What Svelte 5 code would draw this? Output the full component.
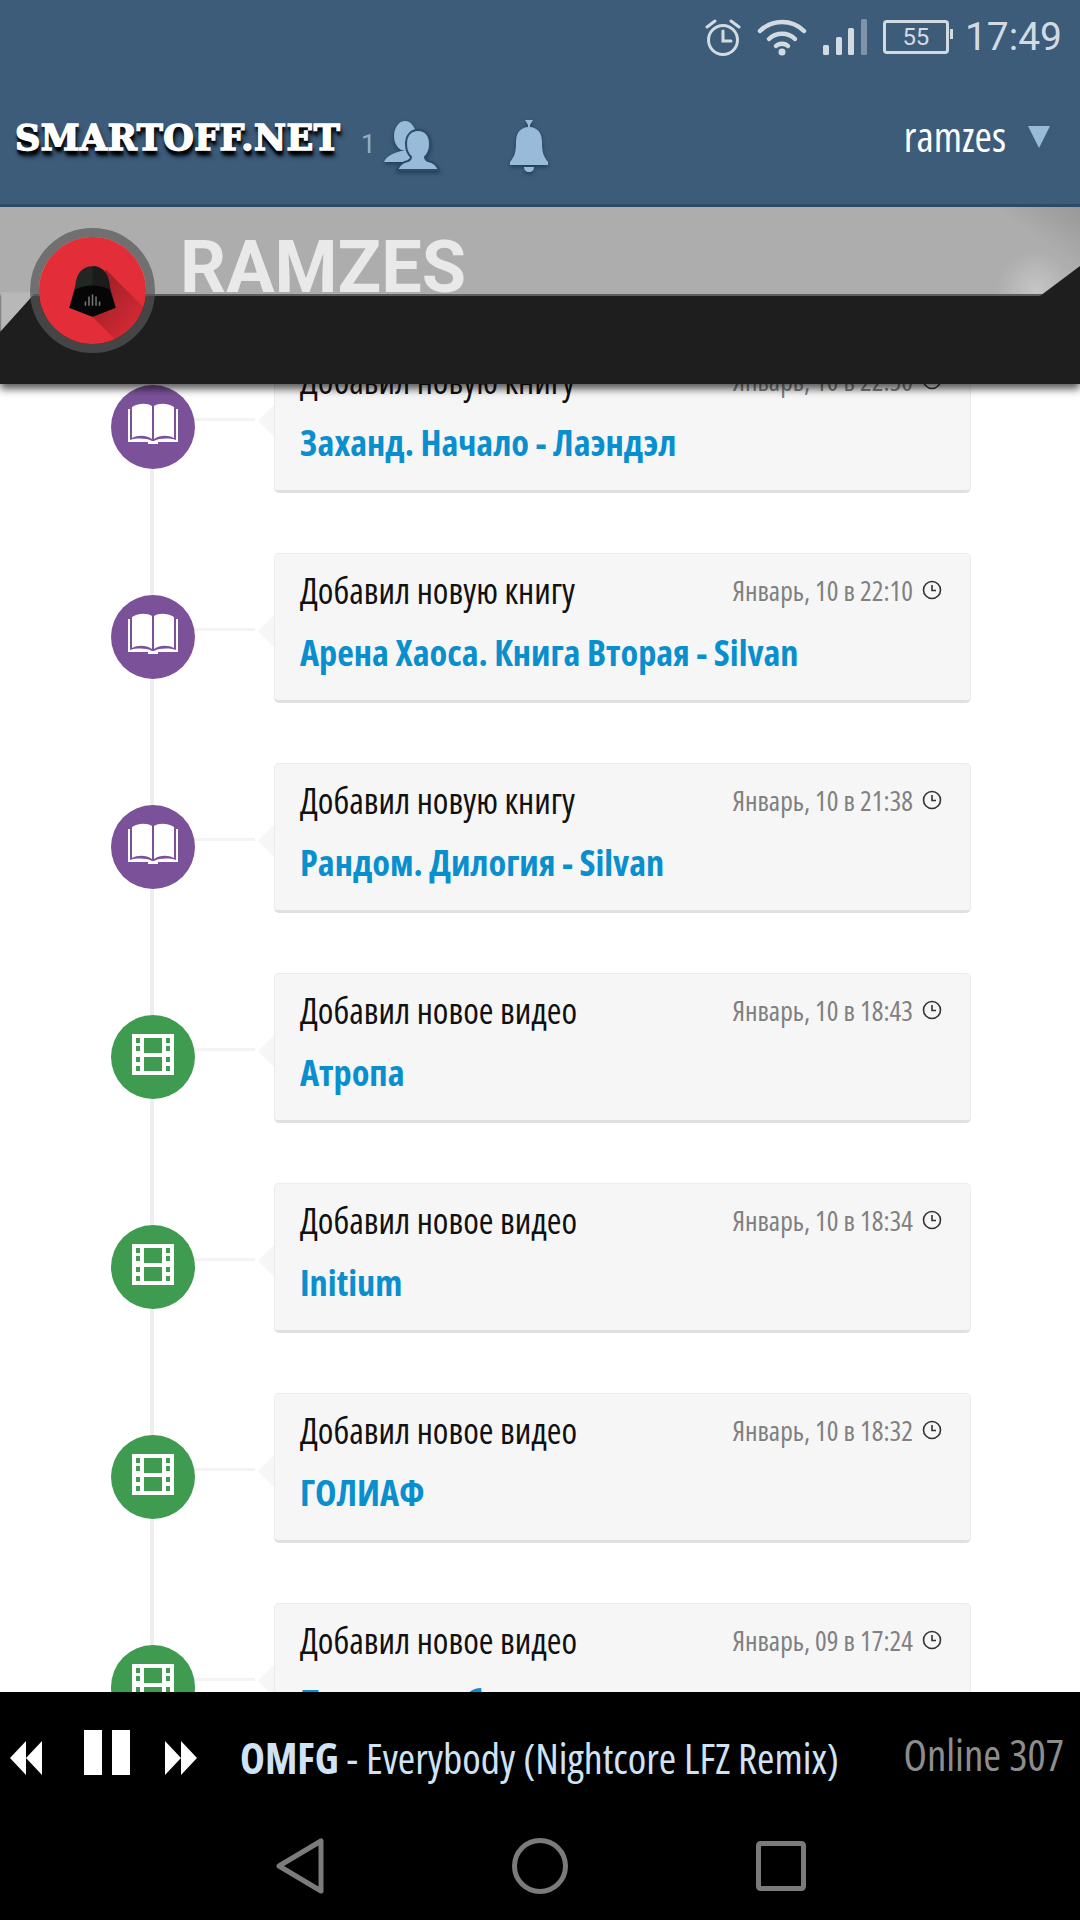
<script>
	const items = [
		{ kind: 'book', action: 'Добавил новую книгу', date: 'Январь, 10 в 22:50', title: 'Заханд. Начало - Лаэндэл' },
		{ kind: 'book', action: 'Добавил новую книгу', date: 'Январь, 10 в 22:10', title: 'Арена Хаоса. Книга Вторая - Silvan' },
		{ kind: 'book', action: 'Добавил новую книгу', date: 'Январь, 10 в 21:38', title: 'Рандом. Дилогия - Silvan' },
		{ kind: 'video', action: 'Добавил новое видео', date: 'Январь, 10 в 18:43', title: 'Атропа' },
		{ kind: 'video', action: 'Добавил новое видео', date: 'Январь, 10 в 18:34', title: 'Initium' },
		{ kind: 'video', action: 'Добавил новое видео', date: 'Январь, 10 в 18:32', title: 'ГОЛИАФ' },
		{ kind: 'video', action: 'Добавил новое видео', date: 'Январь, 09 в 17:24', title: 'Последняя битва' }
	];
</script>

<div class="screen">
	<header class="topbar">
		<div class="status">
			<svg class="ic-alarm" viewBox="0 0 36 38" width="36" height="38" fill="none" stroke="#d3dbe2" stroke-width="3">
				<circle cx="18" cy="22" r="14.5" />
				<path d="M18 13v10h8" stroke-linecap="round" />
				<path d="M2 9 10 3M34 9 26 3" stroke-linecap="round" />
			</svg>
			<svg class="ic-wifi" viewBox="0 0 50 38" width="50" height="38" fill="none" stroke="#d3dbe2" stroke-width="4.5" stroke-linecap="round">
				<path d="M3 13C15 1 35 1 47 13" />
				<path d="M12 21C19 14 31 14 38 21" />
				<path d="M19 28C22 25 28 25 31 28" />
				<circle cx="25" cy="34" r="3.5" fill="#d3dbe2" stroke="none" />
			</svg>
			<svg class="ic-signal" viewBox="0 0 44 36" width="44" height="36" fill="#d3dbe2">
				<rect x="0" y="26" width="6" height="10" rx="1.5" />
				<rect x="13" y="18" width="6" height="18" rx="1.5" />
				<rect x="25" y="9" width="6" height="27" rx="1.5" />
				<rect x="38" y="0" width="6" height="36" rx="1.5" fill="#7f94a8" />
			</svg>
			<div class="battery"><span>55</span></div>
			<span class="clock">17:49</span>
		</div>
		<nav class="mainbar">
			<span class="logo">SMARTOFF.NET</span>
			<span class="count">1</span>
			<svg class="ic-friends" viewBox="0 0 56 50" width="56" height="50" fill="#98bbd9">
				<ellipse cx="21" cy="15" rx="11" ry="15" />
				<path d="M0 41c2-6 10-9 17-11h9v11z" />
				<path d="M34 9c8 0 12 6 12 14 0 6-2 10-5 13 0 2 1 3 3 4 5 1 9 4 11 9H13c2-5 6-8 11-9 2-1 3-2 3-4-3-3-5-7-5-13 0-8 4-14 12-14z" stroke="#2e4b68" stroke-width="2" />
			</svg>
			<svg class="ic-bell" viewBox="0 0 38 52" width="38" height="52" fill="#98bbd9">
				<path d="M15 0h8l-3 5v2c9 1 12 7 12 16 0 10 2 14 6 19v3H0v-3c4-5 6-9 6-19 0-9 3-15 12-16V5z" />
				<path d="M14 47h10c0 3-2 5-5 5s-5-2-5-5z" />
			</svg>
			<span class="user">ramzes</span>
			<span class="caret"></span>
		</nav>
	</header>

	<section class="banner">
		<div class="cover">
			<span class="name">RAMZES</span>
		</div>
		<div class="band"></div>
		<div class="avatar">
			<svg viewBox="0 0 106 106" width="107" height="107">
				<defs>
					<clipPath id="disc"><circle cx="53" cy="53" r="53" /></clipPath>
					<linearGradient id="cast" x1="0.2" y1="0.2" x2="0.9" y2="0.9">
						<stop offset="0" stop-color="#000" stop-opacity=".28" />
						<stop offset="1" stop-color="#000" stop-opacity="0" />
					</linearGradient>
				</defs>
				<circle cx="53" cy="53" r="53" fill="#e32d38" />
				<path d="M66 32 112 78V112H86L52 78z" fill="url(#cast)" clip-path="url(#disc)" />
				<path d="M53 29c-11 0-16 8-17 19l-6 22 23 9 23-9-6-22c-1-11-6-19-17-19z" fill="#232723" />
				<path d="M53 29c11 0 16 8 17 19l1 8H53z" fill="#1b1b1b" />
				<path d="M36 52c5-3 12-4 17-4s12 1 17 4l6 18-23 9-23-9z" fill="#060606" />
				<path d="M46 68v-4M49.500 68v-9M53 68V57M56.500 68v-9M60 68v-4" stroke="#777" stroke-width="1.500" />
			</svg>
		</div>
	</section>

	<main class="feed">
		{#each items as item}
			<article class="row">
				<div class="bubble {item.kind}">
					{#if item.kind === 'book'}
						<svg viewBox="0 0 52 44" width="52" height="44" fill="#fff">
							<path d="M5 4C12 0 20 0 25 3v33c-6-4-14-4-20-1z" />
							<path d="M47 4c-7-4-15-4-20-1v33c6-4 14-4 20-1z" />
							<path d="M1 6h2v31c7-2 16-2 22 1h2c6-3 15-3 22-1V6h2v33H31v2h-10v-2H1z" />
						</svg>
					{:else}
						<svg viewBox="0 0 42 42" width="42" height="42">
							<path fill="#fff" fill-rule="evenodd" d="M0 0h42v41H0zM4 4v5h4V4zM4 12v5h4v-5zM4 23v5h4v-5zM4 32v5h4v-5zM34 4v5h4V4zM34 12v5h4v-5zM34 23v5h4v-5zM34 32v5h4v-5zM12 4v15h18V4zM12 23v14h18V23z" />
						</svg>
					{/if}
				</div>
				<div class="connector"></div>
				<div class="card">
					<div class="card-head">
						<span class="action">{item.action}</span>
						<span class="date">{item.date}</span>
						<svg viewBox="0 0 20 20" width="20" height="20" fill="none" stroke="#333" stroke-width="1.600">
							<circle cx="10" cy="10" r="8.500" />
							<path d="M10 5v5.500h4" />
						</svg>
					</div>
					<a class="title" href="#top">{item.title}</a>
				</div>
			</article>
		{/each}
	</main>

	<footer class="player">
		<svg class="ic-prev" viewBox="0 0 32 34" width="32" height="34" fill="#fff"><path d="M16 0v34L0 17zM32 0v34L16 17z" /></svg>
		<div class="pause"><i></i><i></i></div>
		<svg class="ic-next" viewBox="0 0 32 34" width="32" height="34" fill="#fff"><path d="M0 0v34l16-17zM16 0v34l16-17z" /></svg>
		<div class="track"><b>OMFG</b> - Everybody (Nightcore LFZ Remix)</div>
		<div class="online">Online 307</div>
	</footer>

	<div class="navbar">
		<svg viewBox="0 0 48 56" width="48" height="56" fill="none" stroke="#7b7b7b" stroke-width="5" stroke-linejoin="round"><path d="M45 3v50L3 28z" /></svg>
		<svg viewBox="0 0 56 56" width="56" height="56" fill="none" stroke="#7b7b7b" stroke-width="5"><circle cx="28" cy="28" r="25.500" /></svg>
		<svg viewBox="0 0 50 50" width="50" height="50" fill="none" stroke="#7b7b7b" stroke-width="5" stroke-linejoin="round"><rect x="2.500" y="2.500" width="45" height="45" rx="2" /></svg>
	</div>
</div>

<style>
	:global(body) {
		background: #fff;
	}
	svg {
		flex: none;
	}
	.screen {
		width: 1080px;
		height: 1920px;
		display: flex;
		flex-direction: column;
		overflow: hidden;
		background: #fff;
		font-family: "Open Sans", "Liberation Sans", sans-serif;
		font-stretch: 75%;
	}

	.topbar {
		flex: none;
		height: 204px;
		background: #3d5c7a;
		border-bottom: 3px solid #2d4a68;
		position: relative;
		z-index: 4;
		display: flex;
		flex-direction: column;
	}
	.status {
		height: 74px;
		display: flex;
		align-items: center;
		justify-content: flex-end;
		padding: 0 18px 0 0;
	}
	.ic-alarm { margin-right: 16px; }
	.ic-wifi { margin-right: 16px; }
	.ic-signal { margin-right: 16px; }
	.battery {
		width: 60px;
		height: 28px;
		border: 3px solid #d3dbe2;
		border-radius: 4px;
		display: flex;
		align-items: center;
		justify-content: center;
		position: relative;
		color: #d3dbe2;
		font: 24px Roboto, sans-serif;
		margin-right: 16px;
	}
	.battery::after {
		content: "";
		position: absolute;
		right: -7px;
		top: 6px;
		width: 3px;
		height: 10px;
		background: #d3dbe2;
	}
	.clock {
		color: #d3dbe2;
		font: 39px Roboto, sans-serif;
	}
	.mainbar {
		flex: 1;
		display: flex;
		align-items: center;
		padding: 0 0 0 15px;
		position: relative;
	}
	.logo {
		font: bold 35px "DejaVu Serif", serif;
		color: #fff;
		-webkit-text-stroke: 1.5px #fff;
		letter-spacing: 0.5px;
		text-shadow: 0 3px 2px #000, 1px 5px 3px #000, 2px 6px 5px #0a1622;
		margin-top: -4px;
		width: 346px;
		flex: none;
		white-space: nowrap;
	}
	.count {
		font: 26px Roboto, sans-serif;
		color: #8fb0cd;
		margin: 10px 0 0 0;
		width: 23px;
		flex: none;
	}
	.ic-friends {
		margin: 14px 0 0 0;
		filter: drop-shadow(0 2px 2px #1f3a55);
	}
	.ic-bell {
		margin: 14px 0 0 70px;
		filter: drop-shadow(0 2px 2px #1f3a55);
	}
	.user {
		margin: -8px 0 0 auto;
		color: #fff;
		font-size: 42px;
	}
	.caret {
		width: 0;
		height: 0;
		border-left: 11px solid transparent;
		border-right: 11px solid transparent;
		border-top: 22px solid #98bbd9;
		margin: -4px 30px 0 22px;
	}

	.banner {
		flex: none;
		height: 177px;
		position: relative;
		z-index: 3;
		display: flex;
		flex-direction: column;
		box-shadow: 0 5px 8px rgba(0, 0, 0, 0.65);
	}
	.cover {
		height: 87px;
		box-sizing: border-box;
		padding: 35px 0 0 180px;
		flex: none;
		background:
			radial-gradient(circle at 1036px 84px, #c6c6c6 0, rgba(198, 198, 198, 0) 40px),
			linear-gradient(215deg, #989898 0, rgba(173, 173, 173, 0) 50px),
			#adadad;
	}
	.name {
		display: block;
		font: bold 72px/52px Roboto, sans-serif;
		color: #e9e9e9;
	}
	.band {
		flex: 1;
		background: #1e1e1e;
		border-top: 2px solid #5e5e5e;
		position: relative;
	}
	.band::before {
		content: "";
		position: absolute;
		left: 0;
		top: -4px;
		width: 36px;
		height: 40px;
		background: #b8b8b8;
		clip-path: polygon(0 0, 100% 0, 0 100%);
		filter: blur(1px);
	}
	.band::after {
		content: "";
		position: absolute;
		right: 0;
		bottom: 100%;
		width: 40px;
		height: 30px;
		background: #1e1e1e;
		clip-path: polygon(100% 0, 100% 100%, 0 100%);
	}
	.avatar {
		position: absolute;
		left: 30px;
		top: 21px;
		width: 107px;
		height: 107px;
		border-radius: 50%;
		border: 9px solid rgba(85, 85, 85, 0.7);
		z-index: 2;
		background-clip: padding-box;
	}
	.avatar svg {
		display: block;
	}

	.feed {
		flex: 1;
		min-height: 0;
		margin-top: -41px;
		display: flex;
		flex-direction: column;
		gap: 60px;
		background: linear-gradient(#eee, #eee) 150px 0 / 4px 100% no-repeat;
		overflow: hidden;
	}
	.row {
		flex: none;
		height: 150px;
		position: relative;
		display: flex;
	}
	.bubble {
		position: absolute;
		left: 111px;
		top: 42px;
		width: 84px;
		height: 84px;
		border-radius: 50%;
		display: flex;
		align-items: center;
		justify-content: center;
		padding-bottom: 4px;
		box-sizing: border-box;
	}
	.bubble.book { background: #7b5299; }
	.bubble.video { background: #3f9b50; }
	.connector {
		position: absolute;
		left: 195px;
		top: 75px;
		width: 60px;
		height: 3px;
		background: #f3f3f3;
	}
	.card {
		margin-left: 274px;
		width: 697px;
		height: 150px;
		box-sizing: border-box;
		background: #f6f6f6;
		border: 1px solid #ececec;
		border-bottom: 3px solid #e0e0e0;
		border-radius: 5px;
		padding: 16px 28px 0 25px;
		position: relative;
	}
	.card::before {
		content: "";
		position: absolute;
		left: -17px;
		top: 61px;
		width: 0;
		height: 0;
		border-top: 16px solid transparent;
		border-bottom: 16px solid transparent;
		border-right: 16px solid #f6f6f6;
	}
	.card-head {
		display: flex;
		align-items: center;
		height: 40px;
		gap: 9px;
	}
	.action {
		font-size: 35.500px;
		color: #111;
		margin-right: auto;
	}
	.date {
		font-size: 27.500px;
		color: #808080;
	}
	.title {
		display: block;
		margin-top: 18px;
		font-size: 36.300px;
		line-height: 48px;
		font-weight: bold;
		color: #0a8fce;
		text-decoration: none;
		white-space: nowrap;
	}

	.player {
		flex: none;
		height: 130px;
		background: #000;
		position: relative;
		z-index: 2;
		display: flex;
		align-items: center;
	}
	.ic-prev { margin: 2px 0 0 10px; }
	.pause {
		display: flex;
		gap: 10px;
		margin: -10px 0 0 42px;
	}
	.pause i {
		display: block;
		width: 18px;
		height: 45px;
		background: #fff;
	}
	.ic-next { margin: 2px 0 0 35px; }
	.track {
		margin-left: 43px;
		font-size: 42px;
		color: #cfe3f5;
		white-space: nowrap;
	}
	.online {
		margin: -6px 16px 0 auto;
		font-size: 43px;
		color: #8d8d8d;
		white-space: nowrap;
	}
	.navbar {
		flex: none;
		height: 98px;
		background: #000;
		position: relative;
		z-index: 2;
		display: flex;
		align-items: center;
		padding: 0 0 10px 276px;
		box-sizing: border-box;
		gap: 188px;
	}
</style>
